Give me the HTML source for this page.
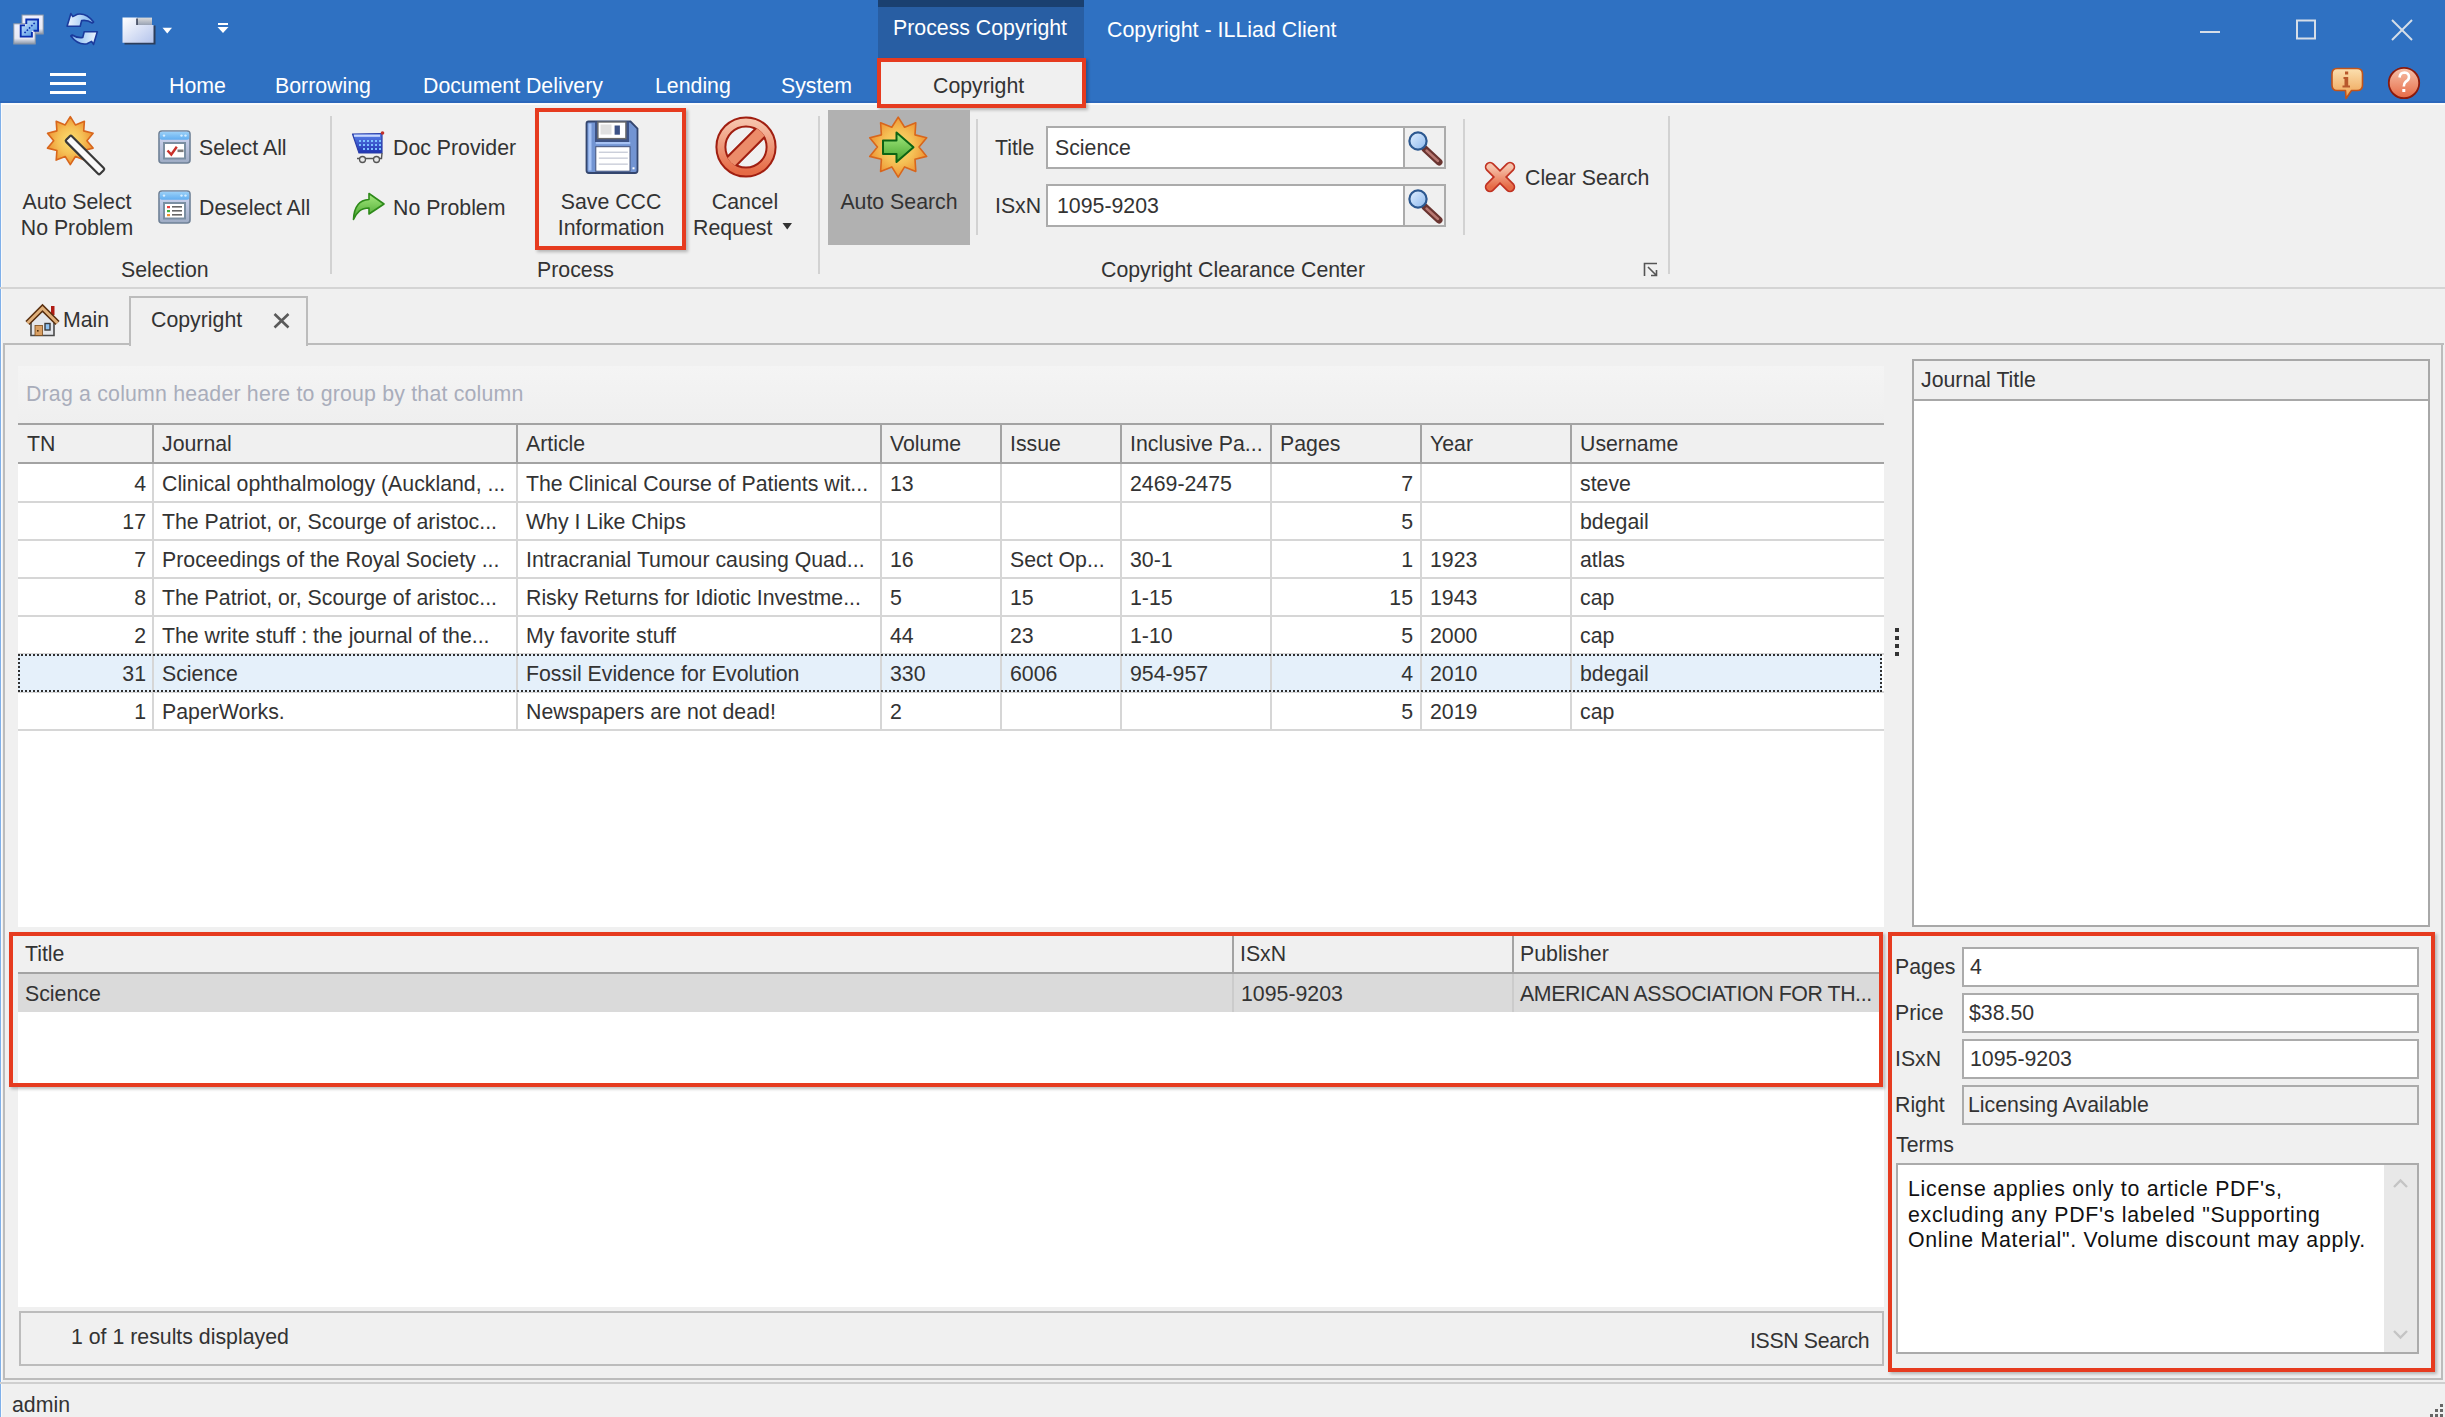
<!DOCTYPE html>
<html><head><meta charset="utf-8">
<style>
html,body{margin:0;padding:0}
body{width:2445px;height:1417px;overflow:hidden;position:relative;background:#f0f0f0;font-family:"Liberation Sans",sans-serif;font-size:21.3px;color:#333}
.a{position:absolute;box-sizing:border-box}
.t{position:absolute;line-height:0;white-space:pre}
.w{color:#fff}
.c{text-align:center}
.r{text-align:right}
svg{position:absolute;overflow:visible}
.sep{position:absolute;width:2px;background:#d2d2d2}
.hl{position:absolute;height:2px}
.vl{position:absolute;width:2px}
.red{position:absolute;box-sizing:border-box;border:4px solid #e63b1f;box-shadow:2px 2px 3px rgba(0,0,0,.25)}
.tb{position:absolute;box-sizing:border-box;border:2px solid #ababab;background:#fff}
</style></head><body>
<!-- ===== TITLE BAR + TAB ROW ===== -->
<div class="a" style="left:0;top:0;width:2445px;height:103px;background:#2f71c2"></div>
<div class="a" style="left:0;top:101px;width:2445px;height:2px;background:#2b67bb"></div>
<div class="a" style="left:0;top:103px;width:2445px;height:2px;background:#fbfbfb"></div>
<div class="a" style="left:0;top:103px;width:1px;height:1314px;background:#7fb0ea"></div>
<div class="a" style="left:1px;top:103px;width:1px;height:1314px;background:#fafafa"></div>
<!-- contextual header -->
<div class="a" style="left:878px;top:0;width:206px;height:58px;background:#285ea3"></div>
<div class="a" style="left:878px;top:0;width:206px;height:7px;background:#1a4070"></div>
<div class="t w" style="left:893px;top:28px">Process Copyright</div>
<div class="t w" style="left:1107px;top:30px;font-size:21.4px">Copyright - ILLiad Client</div>
<!-- QAT ICONS -->
<div id="qat"></div>
<!-- window controls -->
<svg style="left:0;top:0" width="2445" height="60">
 <line x1="2200" y1="32" x2="2220" y2="32" stroke="#d6dee8" stroke-width="2"/>
 <rect x="2297" y="20.5" width="18" height="18" fill="none" stroke="#d6dee8" stroke-width="2"/>
 <line x1="2392" y1="20" x2="2412" y2="40" stroke="#d6dee8" stroke-width="2"/>
 <line x1="2412" y1="20" x2="2392" y2="40" stroke="#d6dee8" stroke-width="2"/>
</svg>
<!-- hamburger -->
<div class="a" style="left:50px;top:73px;width:36px;height:3px;background:#fff"></div>
<div class="a" style="left:50px;top:82px;width:36px;height:3px;background:#fff"></div>
<div class="a" style="left:50px;top:91px;width:36px;height:3px;background:#fff"></div>
<!-- tabs -->
<div class="t w" style="left:169px;top:86px">Home</div>
<div class="t w" style="left:275px;top:86px">Borrowing</div>
<div class="t w" style="left:423px;top:86px">Document Delivery</div>
<div class="t w" style="left:655px;top:86px">Lending</div>
<div class="t w" style="left:781px;top:86px">System</div>
<div class="a" style="left:878px;top:58px;width:206px;height:50px;background:#f0f0f0"></div>
<div class="red" style="left:877px;top:58px;width:209px;height:50px"></div>
<div class="t" style="left:933px;top:86px">Copyright</div>
<!-- ===== RIBBON BODY ===== -->
<svg width="0" height="0" style="left:0;top:0">
 <defs>
  <radialGradient id="gStar" cx="50%" cy="50%" r="50%"><stop offset="0" stop-color="#fbe070"/><stop offset="0.55" stop-color="#f5c055"/><stop offset="1" stop-color="#ee9636"/></radialGradient>
  <linearGradient id="gRed" x1="0" y1="0" x2="0" y2="1"><stop offset="0" stop-color="#f6c2aa"/><stop offset="1" stop-color="#e66a45"/></linearGradient>
  <linearGradient id="gGreen" x1="0" y1="0" x2="0" y2="1"><stop offset="0" stop-color="#a6ea80"/><stop offset="1" stop-color="#46a42c"/></linearGradient>
  <linearGradient id="gBlueWin" x1="0" y1="0" x2="0" y2="1"><stop offset="0" stop-color="#9ad0f8"/><stop offset="1" stop-color="#62aef0"/></linearGradient>
  <linearGradient id="gCart" x1="0" y1="0" x2="0" y2="1"><stop offset="0" stop-color="#5b82ea"/><stop offset="1" stop-color="#1f33b2"/></linearGradient>
  <linearGradient id="gWinBody" x1="0" y1="0" x2="0" y2="1"><stop offset="0" stop-color="#d6dcf8"/><stop offset="1" stop-color="#9eacc4"/></linearGradient>
  <linearGradient id="gInfo" x1="0" y1="0" x2="0" y2="1"><stop offset="0" stop-color="#fbe0b0"/><stop offset="1" stop-color="#eea050"/></linearGradient>
  <linearGradient id="gLens" x1="0" y1="0" x2="1" y2="1"><stop offset="0" stop-color="#e2f0ff"/><stop offset="1" stop-color="#8cb8ee"/></linearGradient>
 </defs>
</svg>
<!-- ribbon bottom line -->
<div class="a" style="left:0;top:287px;width:2445px;height:2px;background:#d4d4d4"></div>
<!-- separators -->
<div class="sep" style="left:330px;top:116px;height:158px"></div>
<div class="sep" style="left:818px;top:116px;height:158px"></div>
<div class="sep" style="left:976px;top:119px;height:116px"></div>
<div class="sep" style="left:1463px;top:119px;height:116px"></div>
<div class="sep" style="left:1668px;top:116px;height:158px"></div>

<!-- Selection group -->
<svg style="left:40px;top:110px" width="72" height="72" viewBox="0 0 72 72">
 <polygon fill="url(#gStar)" stroke="#d8661c" stroke-width="1.6" stroke-linejoin="round" points="30.3,6.7 35.4,14.9 44.4,11.3 43.7,20.9 53.1,23.3 46.9,30.7 53.1,38.1 43.7,40.5 44.4,50.1 35.4,46.5 30.3,54.7 25.2,46.5 16.2,50.1 16.9,40.5 7.5,38.1 13.7,30.7 7.5,23.3 16.9,20.9 16.2,11.3 25.2,14.9"/>
 <g transform="translate(28,28) rotate(45)">
  <rect x="0" y="-4" width="48" height="8" rx="1.5" fill="#fafafa" stroke="#3a3a3a" stroke-width="2.2"/>
 </g>
</svg>
<div class="t c" style="left:17px;width:120px;top:202px">Auto Select</div>
<div class="t c" style="left:17px;width:120px;top:228px">No Problem</div>

<svg style="left:158px;top:130px" width="34" height="34" viewBox="0 0 34 34">
 <rect x="1" y="1" width="31" height="32" rx="3" fill="url(#gWinBody)" stroke="#6f8196" stroke-width="1.6"/>
 <rect x="1.8" y="1.8" width="29.4" height="8" rx="2" fill="url(#gBlueWin)"/>
 <circle cx="6" cy="5.6" r="1.2" fill="#d8eeff"/><circle cx="23.5" cy="5.6" r="1.2" fill="#d8eeff"/><circle cx="27.5" cy="5.6" r="1.2" fill="#d8eeff"/>
 <rect x="6" y="13" width="21" height="15.5" fill="#fff" stroke="#7a8ea2" stroke-width="2"/>
 <path d="M9.5,20.5 L13.3,24.5 L18.8,16.8" fill="none" stroke="#c8302a" stroke-width="2.4"/>
 <rect x="19.5" y="19.5" width="6" height="2.6" fill="#7c7c7c"/>
</svg>
<div class="t" style="left:199px;top:148px">Select All</div>
<svg style="left:158px;top:190px" width="34" height="34" viewBox="0 0 34 34">
 <rect x="1" y="1" width="31" height="32" rx="3" fill="url(#gWinBody)" stroke="#6f8196" stroke-width="1.6"/>
 <rect x="1.8" y="1.8" width="29.4" height="8" rx="2" fill="url(#gBlueWin)"/>
 <circle cx="6" cy="5.6" r="1.2" fill="#d8eeff"/><circle cx="23.5" cy="5.6" r="1.2" fill="#d8eeff"/><circle cx="27.5" cy="5.6" r="1.2" fill="#d8eeff"/>
 <rect x="6" y="13" width="21" height="15.5" fill="#fff" stroke="#7a8ea2" stroke-width="2"/>
 <rect x="9" y="16" width="3" height="2.2" fill="#e84040"/><rect x="9" y="20" width="3" height="2.2" fill="#40b040"/><rect x="9" y="24" width="3" height="2.2" fill="#f09030"/>
 <rect x="14" y="16" width="10" height="1.6" fill="#666"/><rect x="14" y="20" width="10" height="1.6" fill="#666"/><rect x="14" y="24" width="10" height="1.6" fill="#666"/>
</svg>
<div class="t" style="left:199px;top:208px">Deselect All</div>
<div class="t" style="left:121px;top:270px">Selection</div>

<!-- Process group -->
<svg style="left:350px;top:129px" width="38" height="36" viewBox="0 0 38 36">
 <path d="M2.5,5 L32,4.5 L32,24 L9,24 Z" fill="url(#gCart)" stroke="#2b3fa8" stroke-width="1.2" stroke-linejoin="round"/>
 <rect x="4" y="5.6" width="26" height="2.2" fill="#c8d8ff"/>
 <g fill="#7cc0ff">
  <rect x="9" y="11" width="2" height="2"/><rect x="13" y="11" width="2" height="2"/><rect x="17" y="11" width="2" height="2"/><rect x="21" y="11" width="2" height="2"/><rect x="25" y="11" width="2" height="2"/><rect x="29" y="11" width="2" height="2"/>
  <rect x="9" y="15" width="2" height="2"/><rect x="13" y="15" width="2" height="2"/><rect x="17" y="15" width="2" height="2"/><rect x="21" y="15" width="2" height="2"/><rect x="25" y="15" width="2" height="2"/><rect x="29" y="15" width="2" height="2"/>
  <rect x="13" y="19" width="2" height="2"/><rect x="17" y="19" width="2" height="2"/><rect x="21" y="19" width="2" height="2"/><rect x="25" y="19" width="2" height="2"/><rect x="29" y="19" width="2" height="2"/>
 </g>
 <circle cx="32.5" cy="4" r="1.8" fill="#c0302a"/>
 <path d="M32,24 L31.5,29.5 L7,29.5" fill="none" stroke="#555" stroke-width="1.4"/>
 <circle cx="12.5" cy="30.5" r="3" fill="#e8e8e8" stroke="#555" stroke-width="1.3"/>
 <circle cx="26.5" cy="30.5" r="3" fill="#e8e8e8" stroke="#555" stroke-width="1.3"/>
</svg>
<div class="t" style="left:393px;top:148px">Doc Provider</div>
<svg style="left:350px;top:190px" width="36" height="34" viewBox="0 0 36 34">
 <path d="M3.5,29.5 C4,17 9.5,10 19,9.5 L19,3.5 L34,14 L19,24 L19,18 C11,18 7,22 3.5,29.5 Z" fill="url(#gGreen)" stroke="#2e8a1a" stroke-width="1.6" stroke-linejoin="round"/>
</svg>
<div class="t" style="left:393px;top:208px">No Problem</div>

<svg style="left:584px;top:119px" width="56" height="56" viewBox="0 0 56 56">
 <path d="M4.5,2.5 L46.5,2.5 L53.5,9.5 L53.5,51.5 Q53.5,54 51,54 L5,54 Q2.5,54 2.5,51.5 L2.5,4.5 Q2.5,2.5 4.5,2.5 Z" fill="#7294d2" stroke="#34466e" stroke-width="1.8"/>
 <rect x="4.5" y="4.5" width="3" height="47" fill="#a8c4f6"/>
 <rect x="11" y="2.5" width="34" height="20.5" fill="#3d5284"/>
 <rect x="13.9" y="3" width="28" height="16.6" fill="#fff" stroke="#6b6b6b" stroke-width="1.4"/>
 <rect x="16.5" y="5.5" width="11" height="10" fill="#e0e0e0"/>
 <rect x="30.6" y="6.5" width="5.3" height="9.2" fill="#3c5286"/>
 <rect x="11.8" y="23" width="34.5" height="2.2" fill="#a6c2f4"/>
 <rect x="11.8" y="27.7" width="34.2" height="24.5" fill="#fff" stroke="#405078" stroke-width="1"/>
 <rect x="14.8" y="32.6" width="29" height="1.3" fill="#c6cad6"/><rect x="14.8" y="38.5" width="29" height="1.3" fill="#c6cad6"/><rect x="14.8" y="44.5" width="29" height="1.3" fill="#c6cad6"/>
 <rect x="48.5" y="48.3" width="2" height="2" fill="#fff"/>
</svg>
<div class="red" style="left:535px;top:108px;width:151px;height:142px"></div>
<div class="t c" style="left:536px;width:150px;top:202px">Save CCC</div>
<div class="t c" style="left:536px;width:150px;top:228px">Information</div>

<svg style="left:714px;top:115px" width="64" height="64" viewBox="0 0 64 64">
 <defs><clipPath id="cp1"><circle cx="32" cy="32" r="21.5"/></clipPath></defs>
 <circle cx="32" cy="32" r="25.1" fill="none" stroke="url(#gRed)" stroke-width="9"/>
 <circle cx="32" cy="32" r="29.6" fill="none" stroke="#a01e10" stroke-width="2"/>
 <circle cx="32" cy="32" r="20.6" fill="none" stroke="#a01e10" stroke-width="2"/>
 <g clip-path="url(#cp1)"><rect x="-10" y="25.8" width="84" height="12.4" fill="#ec8c6a" stroke="#a01e10" stroke-width="2" transform="rotate(-45 32 32)"/></g>
 
</svg>
<div class="t c" style="left:695px;width:100px;top:202px">Cancel</div>
<div class="t" style="left:693px;top:228px">Request</div>
<svg style="left:782px;top:222px" width="12" height="10"><polygon points="0.5,1 10,1 5.25,7.5" fill="#333"/></svg>
<div class="t" style="left:537px;top:270px">Process</div>

<!-- Auto search -->
<div class="a" style="left:828px;top:110px;width:142px;height:135px;background:#b1b1b1"></div>
<svg style="left:862px;top:112px" width="72" height="72" viewBox="0 0 72 72">
 <polygon fill="url(#gStar)" stroke="#d8661c" stroke-width="1.6" stroke-linejoin="round" points="36.2,5.1 42.6,15.3 53.8,10.8 53.0,22.9 64.7,25.8 57.0,35.1 64.7,44.4 53.0,47.3 53.8,59.4 42.6,54.9 36.2,65.1 29.8,54.9 18.6,59.4 19.4,47.3 7.7,44.4 15.4,35.1 7.7,25.8 19.4,22.9 18.6,10.8 29.8,15.3"/>
 <path d="M21,28.5 L34.5,28.5 L34.5,20.5 L51.5,35.2 L34.5,50 L34.5,42 L21,42 Z" fill="url(#gGreen)" stroke="#0c6414" stroke-width="2" stroke-linejoin="round"/>
</svg>
<div class="t c" style="left:828px;width:142px;top:202px">Auto Search</div>

<!-- CCC group -->
<div class="t" style="left:995px;top:148px">Title</div>
<div class="tb" style="left:1046px;top:126px;width:400px;height:43px"></div>
<div class="a" style="left:1403px;top:127px;width:2px;height:41px;background:#ababab"></div>
<div class="a" style="left:1405px;top:128px;width:39px;height:39px;background:#f0f0f0"></div>
<div class="t" style="left:1055px;top:148px">Science</div>
<div class="t" style="left:995px;top:206px">ISxN</div>
<div class="tb" style="left:1046px;top:184px;width:400px;height:43px"></div>
<div class="a" style="left:1403px;top:185px;width:2px;height:41px;background:#ababab"></div>
<div class="a" style="left:1405px;top:186px;width:39px;height:39px;background:#f0f0f0"></div>
<div class="t" style="left:1057px;top:206px">1095-9203</div>
<svg style="left:1404px;top:126px" width="42" height="42" viewBox="0 0 42 42">
 <line x1="21" y1="23" x2="35" y2="36" stroke="#6a3430" stroke-width="7" stroke-linecap="round"/>
 <line x1="22.5" y1="24.5" x2="34" y2="35" stroke="#b87872" stroke-width="2.4" stroke-linecap="round"/>
 <circle cx="14" cy="15" r="8.6" fill="url(#gLens)" stroke="#2c5890" stroke-width="2.2"/>
</svg>
<svg style="left:1404px;top:184px" width="42" height="42" viewBox="0 0 42 42">
 <line x1="21" y1="23" x2="35" y2="36" stroke="#6a3430" stroke-width="7" stroke-linecap="round"/>
 <line x1="22.5" y1="24.5" x2="34" y2="35" stroke="#b87872" stroke-width="2.4" stroke-linecap="round"/>
 <circle cx="14" cy="15" r="8.6" fill="url(#gLens)" stroke="#2c5890" stroke-width="2.2"/>
</svg>
<svg style="left:1480px;top:157px" width="40" height="40" viewBox="0 0 40 40">
 <g stroke-linecap="round">
  <line x1="10" y1="10" x2="30" y2="30" stroke="#c03222" stroke-width="10.5"/>
  <line x1="30" y1="10" x2="10" y2="30" stroke="#c03222" stroke-width="10.5"/>
  <line x1="10" y1="10" x2="30" y2="30" stroke="url(#gRed)" stroke-width="7"/>
  <line x1="30" y1="10" x2="10" y2="30" stroke="url(#gRed)" stroke-width="7"/>
 </g>
</svg>
<div class="t" style="left:1525px;top:178px">Clear Search</div>
<div class="t" style="left:1101px;top:270px">Copyright Clearance Center</div>
<svg style="left:1643px;top:262px" width="16" height="16" viewBox="0 0 16 16">
 <path d="M1.5,14 L1.5,1.5 L14,1.5" fill="none" stroke="#555" stroke-width="1.6"/>
 <path d="M5,5 L13.5,13.5 M8,13.5 L13.5,13.5 L13.5,8" fill="none" stroke="#555" stroke-width="1.6"/>
</svg>

<!-- title bar icons -->
<svg style="left:10px;top:10px" width="40" height="40" viewBox="0 0 40 40">
 <defs><linearGradient id="gQ1" x1="0" y1="0" x2="0" y2="1"><stop offset="0" stop-color="#eef0ff"/><stop offset="0.72" stop-color="#e8eaf4"/><stop offset="1" stop-color="#8a96a8"/></linearGradient>
 <linearGradient id="gQ2" x1="0" y1="0" x2="1" y2="1"><stop offset="0" stop-color="#d8ecff"/><stop offset="1" stop-color="#3c8ae0"/></linearGradient></defs>
 <rect x="12" y="5" width="21.2" height="19" fill="url(#gQ1)" stroke="#8a96a6" stroke-width="1"/>
 <rect x="3.8" y="13.8" width="21.4" height="20.2" fill="url(#gQ1)" stroke="#8a96a6" stroke-width="1"/>
 <path d="M10.7,15.4 L16.3,15.4 L16.3,9.5 L28.1,9.5 L28.1,20.7 L21.9,20.7 L21.9,26.6 L10.7,26.6 Z" fill="url(#gQ2)"/>
 <path d="M15,15.4 L10.7,15.4 L10.7,26.6 L21.9,26.6 L21.9,22" fill="none" stroke="#0a2fb0" stroke-width="1.9"/>
 <path d="M16.3,14 L16.3,9.5 L28.1,9.5 L28.1,20.7 L23.5,20.7" fill="none" stroke="#0a2fb0" stroke-width="1.9"/>
 <path d="M14.5,23 L25,12.5" stroke="#0a2fb0" stroke-width="1.6" stroke-dasharray="1.6 1.6"/>
</svg>
<svg style="left:62px;top:10px" width="40" height="40" viewBox="0 0 40 40">
 <defs><linearGradient id="gSync" x1="0" y1="0" x2="1" y2="0"><stop offset="0" stop-color="#eef6ff"/><stop offset="1" stop-color="#7cb4ee"/></linearGradient></defs>
 <g id="syncA">
  <path d="M8.9,3.6 L10.8,6.6 L15.4,4.2 Q24.5,2.6 31.6,12 L30.2,13 Q25,9.6 19.6,10.6 L18.2,16.3 L5.1,16.3 Z" fill="url(#gSync)" stroke="#1a3a9c" stroke-width="1.6" stroke-linejoin="round"/>
 </g>
 <g transform="rotate(180 20.2 19)">
  <path d="M8.9,3.6 L10.8,6.6 L15.4,4.2 Q24.5,2.6 31.6,12 L30.2,13 Q25,9.6 19.6,10.6 L18.2,16.3 L5.1,16.3 Z" fill="url(#gSync)" stroke="#1a3a9c" stroke-width="1.6" stroke-linejoin="round"/>
 </g>
</svg>
<svg style="left:120px;top:15px" width="40" height="32" viewBox="0 0 40 32">
 <defs>
  <linearGradient id="gFold" x1="0" y1="0" x2="1" y2="1"><stop offset="0" stop-color="#ffffff"/><stop offset="1" stop-color="#b4c4ec"/></linearGradient>
  <linearGradient id="gTab" x1="0" y1="0" x2="0" y2="1"><stop offset="0" stop-color="#dcdcdc"/><stop offset="1" stop-color="#98a2b4"/></linearGradient>
 </defs>
 <path d="M4.5,10.5 L35.5,10.5 L35.5,29.5 L4.5,29.5 Z" fill="#2e3850" opacity="0.9"/>
 <path d="M2.5,2.6 L17,2.6 L17,10 L33.5,10 L33.5,27.7 L2.5,27.7 Z" fill="url(#gFold)"/>
 <rect x="17" y="2.6" width="15" height="7.4" fill="url(#gTab)"/>
 <rect x="16.2" y="3.5" width="1.6" height="6.5" fill="#3a4258"/>
</svg>
<svg style="left:162px;top:27px" width="12" height="10"><polygon points="0.5,0.8 10,0.8 5.25,6.5" fill="#fff"/></svg>
<svg style="left:217px;top:21px" width="14" height="14"><rect x="1" y="2" width="10" height="2" fill="#fff"/><polygon points="0.5,6 11.5,6 6,12" fill="#fff"/></svg>
<!-- info / help -->
<svg style="left:2330px;top:66px" width="36" height="36" viewBox="0 0 36 36">
 <path d="M7,2.5 L27,2.5 Q32.5,2.5 32.5,8 L32.5,19 Q32.5,24.5 27,24.5 L21.5,24.5 L16,32.5 L15.5,24.5 L7,24.5 Q2,24.5 2,19 L2,8 Q2,2.5 7,2.5 Z" fill="url(#gInfo)" stroke="#c0541c" stroke-width="1.6" stroke-linejoin="round"/>
 <rect x="15" y="5.5" width="3.2" height="3" fill="#b8582c"/>
 <path d="M13.5,11 L18.2,11 L18.2,19.5 L20,19.5 L20,21.5 L12.5,21.5 L12.5,19.5 L14.5,19.5 L14.5,13 L13.5,13 Z" fill="#b8582c"/>
</svg>
<svg style="left:2386px;top:65px" width="36" height="36" viewBox="0 0 36 36">
 <circle cx="18" cy="18" r="15.2" fill="url(#gRed)" stroke="#8a1a0c" stroke-width="1.8"/>
 <path d="M13.5,12.5 Q14,7.5 18.5,7.5 Q23,7.8 23,12 Q23,15 19.5,17 Q17.8,18.5 17.8,21.5" fill="none" stroke="#fff" stroke-width="2.6"/>
 <rect x="16.3" y="24" width="3" height="3" fill="#fff"/>
</svg>
<!-- ===== DOCUMENT TABS ===== -->
<svg style="left:22px;top:300px" width="40" height="40" viewBox="0 0 40 40">
 <rect x="29" y="6" width="3.5" height="9" fill="#b01c14"/>
 <path d="M9,22 L9,35.5 L32,35.5 L32,22 L20.5,11 Z" fill="#e4e6ea" stroke="#4a4a4a" stroke-width="1.6"/>
 <rect x="13" y="25.5" width="7.5" height="10" fill="#d9a064" stroke="#7a4a18" stroke-width="0.8"/>
 <rect x="15" y="30" width="1.6" height="1.6" fill="#4a2a08"/>
 <rect x="23" y="23.5" width="5" height="6.5" fill="#8cc0f0" stroke="#3a3a3a" stroke-width="1.4"/>
 <path d="M5.5,23 L20.5,8 L35.5,23" fill="none" stroke="#5a3010" stroke-width="6" stroke-linejoin="miter"/>
 <path d="M5.5,23 L20.5,8 L35.5,23" fill="none" stroke="#e0b07a" stroke-width="3" stroke-linejoin="miter"/>
</svg>
<div class="t" style="left:63px;top:320px">Main</div>
<!-- content panel border -->
<div class="a" style="left:3px;top:343px;width:2441px;height:37px;border-top:2px solid #bcbcbc"></div>
<div class="a" style="left:3px;top:343px;width:2px;height:1037px;background:#bcbcbc"></div>
<div class="a" style="left:2441px;top:343px;width:2px;height:1037px;background:#bcbcbc"></div>
<div class="a" style="left:3px;top:1378px;width:2440px;height:2px;background:#bcbcbc"></div>
<!-- selected tab -->
<div class="a" style="left:129px;top:296px;width:179px;height:50px;border:2px solid #bcbcbc;border-bottom:none;background:#f0f0f0"></div>
<div class="t" style="left:151px;top:320px">Copyright</div>
<svg style="left:271px;top:311px" width="22" height="20"><path d="M3.5,3 L17.5,16.5 M17.5,3 L3.5,16.5" stroke="#5a5a5a" stroke-width="2.6"/></svg>

<!-- ===== MAIN GRID ===== -->
<div class="a" style="left:18px;top:366px;width:1866px;height:57px;background:linear-gradient(#f4f4f4,#efefef)"></div>
<div class="t" style="left:26px;top:394px;color:#a9adbb;letter-spacing:0.2px">Drag a column header here to group by that column</div>
<div class="a" style="left:18px;top:423px;width:1866px;height:41px;background:#f0f0f0;border-top:2px solid #a3a3a3;border-bottom:2px solid #a3a3a3"></div>
<div class="a" style="left:18px;top:464px;width:1866px;height:463px;background:#fff"></div>
<!-- header col seps -->
<div class="vl" style="left:152px;top:425px;height:38px;background:#a3a3a3"></div>
<div class="vl" style="left:516px;top:425px;height:38px;background:#a3a3a3"></div>
<div class="vl" style="left:880px;top:425px;height:38px;background:#a3a3a3"></div>
<div class="vl" style="left:1000px;top:425px;height:38px;background:#a3a3a3"></div>
<div class="vl" style="left:1120px;top:425px;height:38px;background:#a3a3a3"></div>
<div class="vl" style="left:1270px;top:425px;height:38px;background:#a3a3a3"></div>
<div class="vl" style="left:1420px;top:425px;height:38px;background:#a3a3a3"></div>
<div class="vl" style="left:1570px;top:425px;height:38px;background:#a3a3a3"></div>
<div class="t" style="left:27px;top:444px">TN</div>
<div class="t" style="left:162px;top:444px">Journal</div>
<div class="t" style="left:526px;top:444px">Article</div>
<div class="t" style="left:890px;top:444px">Volume</div>
<div class="t" style="left:1010px;top:444px">Issue</div>
<div class="t" style="left:1130px;top:444px">Inclusive Pa...</div>
<div class="t" style="left:1280px;top:444px">Pages</div>
<div class="t" style="left:1430px;top:444px">Year</div>
<div class="t" style="left:1580px;top:444px">Username</div>
<!-- row lines -->
<div class="hl" style="left:18px;top:501px;width:1866px;background:#d6d6d6"></div>
<div class="hl" style="left:18px;top:539px;width:1866px;background:#d6d6d6"></div>
<div class="hl" style="left:18px;top:577px;width:1866px;background:#d6d6d6"></div>
<div class="hl" style="left:18px;top:615px;width:1866px;background:#d6d6d6"></div>
<div class="hl" style="left:18px;top:653px;width:1866px;background:#d6d6d6"></div>
<div class="hl" style="left:18px;top:691px;width:1866px;background:#d6d6d6"></div>
<div class="hl" style="left:18px;top:729px;width:1866px;background:#d6d6d6"></div>
<!-- selected row -->
<div class="a" style="left:18px;top:654px;width:1864px;height:38px;background:#e5f0fa"></div>
<div class="vl" style="left:152px;top:464px;height:266px;background:#d6d6d6"></div>
<div class="vl" style="left:516px;top:464px;height:266px;background:#d6d6d6"></div>
<div class="vl" style="left:880px;top:464px;height:266px;background:#d6d6d6"></div>
<div class="vl" style="left:1000px;top:464px;height:266px;background:#d6d6d6"></div>
<div class="vl" style="left:1120px;top:464px;height:266px;background:#d6d6d6"></div>
<div class="vl" style="left:1270px;top:464px;height:266px;background:#d6d6d6"></div>
<div class="vl" style="left:1420px;top:464px;height:266px;background:#d6d6d6"></div>
<div class="vl" style="left:1570px;top:464px;height:266px;background:#d6d6d6"></div>
<div class="a" style="left:18px;top:654px;width:1864px;height:38px;border:2px dotted #303030"></div>
<!-- rows -->
<div id="rows">
<div class="t r" style="left:18px;width:128px;top:484px">4</div>
<div class="t" style="left:162px;top:484px">Clinical ophthalmology (Auckland, ...</div>
<div class="t" style="left:526px;top:484px">The Clinical Course of Patients wit...</div>
<div class="t" style="left:890px;top:484px">13</div>
<div class="t" style="left:1130px;top:484px">2469-2475</div>
<div class="t r" style="left:1271px;width:142px;top:484px">7</div>
<div class="t" style="left:1580px;top:484px">steve</div>
<div class="t r" style="left:18px;width:128px;top:522px">17</div>
<div class="t" style="left:162px;top:522px">The Patriot, or, Scourge of aristoc...</div>
<div class="t" style="left:526px;top:522px">Why I Like Chips</div>
<div class="t r" style="left:1271px;width:142px;top:522px">5</div>
<div class="t" style="left:1580px;top:522px">bdegail</div>
<div class="t r" style="left:18px;width:128px;top:560px">7</div>
<div class="t" style="left:162px;top:560px">Proceedings of the Royal Society ...</div>
<div class="t" style="left:526px;top:560px">Intracranial Tumour causing Quad...</div>
<div class="t" style="left:890px;top:560px">16</div>
<div class="t" style="left:1010px;top:560px">Sect Op...</div>
<div class="t" style="left:1130px;top:560px">30-1</div>
<div class="t r" style="left:1271px;width:142px;top:560px">1</div>
<div class="t" style="left:1430px;top:560px">1923</div>
<div class="t" style="left:1580px;top:560px">atlas</div>
<div class="t r" style="left:18px;width:128px;top:598px">8</div>
<div class="t" style="left:162px;top:598px">The Patriot, or, Scourge of aristoc...</div>
<div class="t" style="left:526px;top:598px">Risky Returns for Idiotic Investme...</div>
<div class="t" style="left:890px;top:598px">5</div>
<div class="t" style="left:1010px;top:598px">15</div>
<div class="t" style="left:1130px;top:598px">1-15</div>
<div class="t r" style="left:1271px;width:142px;top:598px">15</div>
<div class="t" style="left:1430px;top:598px">1943</div>
<div class="t" style="left:1580px;top:598px">cap</div>
<div class="t r" style="left:18px;width:128px;top:636px">2</div>
<div class="t" style="left:162px;top:636px">The write stuff : the journal of the...</div>
<div class="t" style="left:526px;top:636px">My favorite stuff</div>
<div class="t" style="left:890px;top:636px">44</div>
<div class="t" style="left:1010px;top:636px">23</div>
<div class="t" style="left:1130px;top:636px">1-10</div>
<div class="t r" style="left:1271px;width:142px;top:636px">5</div>
<div class="t" style="left:1430px;top:636px">2000</div>
<div class="t" style="left:1580px;top:636px">cap</div>
<div class="t r" style="left:18px;width:128px;top:674px">31</div>
<div class="t" style="left:162px;top:674px">Science</div>
<div class="t" style="left:526px;top:674px">Fossil Evidence for Evolution</div>
<div class="t" style="left:890px;top:674px">330</div>
<div class="t" style="left:1010px;top:674px">6006</div>
<div class="t" style="left:1130px;top:674px">954-957</div>
<div class="t r" style="left:1271px;width:142px;top:674px">4</div>
<div class="t" style="left:1430px;top:674px">2010</div>
<div class="t" style="left:1580px;top:674px">bdegail</div>
<div class="t r" style="left:18px;width:128px;top:712px">1</div>
<div class="t" style="left:162px;top:712px">PaperWorks.</div>
<div class="t" style="left:526px;top:712px">Newspapers are not dead!</div>
<div class="t" style="left:890px;top:712px">2</div>
<div class="t r" style="left:1271px;width:142px;top:712px">5</div>
<div class="t" style="left:1430px;top:712px">2019</div>
<div class="t" style="left:1580px;top:712px">cap</div>
</div>
<!-- splitter dots -->
<div class="a" style="left:1895px;top:628px;width:4px;height:4px;background:#333"></div>
<div class="a" style="left:1895px;top:636px;width:4px;height:4px;background:#333"></div>
<div class="a" style="left:1895px;top:644px;width:4px;height:4px;background:#333"></div>
<div class="a" style="left:1895px;top:652px;width:4px;height:4px;background:#333"></div>

<!-- ===== JOURNAL TITLE PANEL ===== -->
<div class="a" style="left:1912px;top:359px;width:518px;height:568px;border:2px solid #a8a8a8;background:#fff"></div>
<div class="a" style="left:1914px;top:361px;width:514px;height:40px;background:#f0f0f0;border-bottom:2px solid #a8a8a8"></div>
<div class="t" style="left:1921px;top:380px">Journal Title</div>

<!-- ===== BOTTOM GRID ===== -->
<div class="a" style="left:18px;top:936px;width:1866px;height:371px;background:#fff"></div>
<div class="a" style="left:18px;top:936px;width:1864px;height:38px;background:#f0f0f0;border-bottom:2px solid #a3a3a3"></div>
<div class="vl" style="left:1232px;top:936px;height:36px;background:#a3a3a3"></div>
<div class="vl" style="left:1512px;top:936px;height:36px;background:#a3a3a3"></div>
<div class="a" style="left:18px;top:974px;width:1864px;height:38px;background:#dadada"></div>
<div class="vl" style="left:1232px;top:974px;height:38px;background:#cbcbcb"></div>
<div class="vl" style="left:1512px;top:974px;height:38px;background:#cbcbcb"></div>
<div class="t" style="left:25px;top:954px">Title</div>
<div class="t" style="left:1240px;top:954px">ISxN</div>
<div class="t" style="left:1520px;top:954px">Publisher</div>
<div class="t" style="left:25px;top:994px">Science</div>
<div class="t" style="left:1241px;top:994px">1095-9203</div>
<div class="t" style="left:1520px;top:994px;letter-spacing:-0.4px">AMERICAN ASSOCIATION FOR TH...</div>
<div class="red" style="left:9px;top:932px;width:1874px;height:155px"></div>

<!-- results panel -->
<div class="a" style="left:19px;top:1311px;width:1865px;height:55px;border:2px solid #bcbcbc;background:#f0f0f0"></div>
<div class="t" style="left:71px;top:1337px">1 of 1 results displayed</div>
<div class="t" style="left:1750px;top:1341px;letter-spacing:-0.35px">ISSN Search</div>

<!-- ===== DETAILS PANEL ===== -->
<div class="t" style="left:1895px;top:967px">Pages</div>
<div class="t" style="left:1895px;top:1013px">Price</div>
<div class="t" style="left:1895px;top:1059px">ISxN</div>
<div class="t" style="left:1895px;top:1105px">Right</div>
<div class="tb" style="left:1962px;top:947px;width:457px;height:40px"></div>
<div class="tb" style="left:1962px;top:993px;width:457px;height:40px"></div>
<div class="tb" style="left:1962px;top:1039px;width:457px;height:40px"></div>
<div class="tb" style="left:1962px;top:1085px;width:457px;height:40px;background:#f0f0f0"></div>
<div class="t" style="left:1970px;top:967px">4</div>
<div class="t" style="left:1969px;top:1013px">$38.50</div>
<div class="t" style="left:1970px;top:1059px">1095-9203</div>
<div class="t" style="left:1968px;top:1105px">Licensing Available</div>
<div class="t" style="left:1896px;top:1145px">Terms</div>
<div class="tb" style="left:1896px;top:1163px;width:523px;height:191px"></div>
<div class="a" style="left:2384px;top:1165px;width:33px;height:187px;background:#e8e8e8"></div>
<svg style="left:2384px;top:1165px" width="33" height="187">
 <path d="M10,22 L16.5,15.5 L23,22" fill="none" stroke="#c4c4c4" stroke-width="2.4"/>
 <path d="M10,166 L16.5,172.5 L23,166" fill="none" stroke="#c4c4c4" stroke-width="2.4"/>
</svg>
<div class="a" style="left:1908px;top:1177px;width:470px;line-height:25.7px;font-size:21.3px;letter-spacing:0.72px;color:#111;white-space:pre">License applies only to article PDF's,
excluding any PDF's labeled "Supporting
Online Material". Volume discount may apply.</div>
<div class="red" style="left:1888px;top:932px;width:547px;height:440px"></div>

<!-- ===== STATUS BAR ===== -->
<div class="a" style="left:0;top:1382px;width:2445px;height:2px;background:#cfcfcf"></div>
<div class="t" style="left:12px;top:1405px">admin</div>
<svg style="left:2430px;top:1400px" width="15" height="17">
 <rect x="10" y="4" width="3" height="3" fill="#666"/><rect x="5" y="9" width="3" height="3" fill="#666"/><rect x="10" y="9" width="3" height="3" fill="#666"/>
 <rect x="0" y="14" width="3" height="3" fill="#666"/><rect x="5" y="14" width="3" height="3" fill="#666"/><rect x="10" y="14" width="3" height="3" fill="#666"/>
</svg>
</body></html>
